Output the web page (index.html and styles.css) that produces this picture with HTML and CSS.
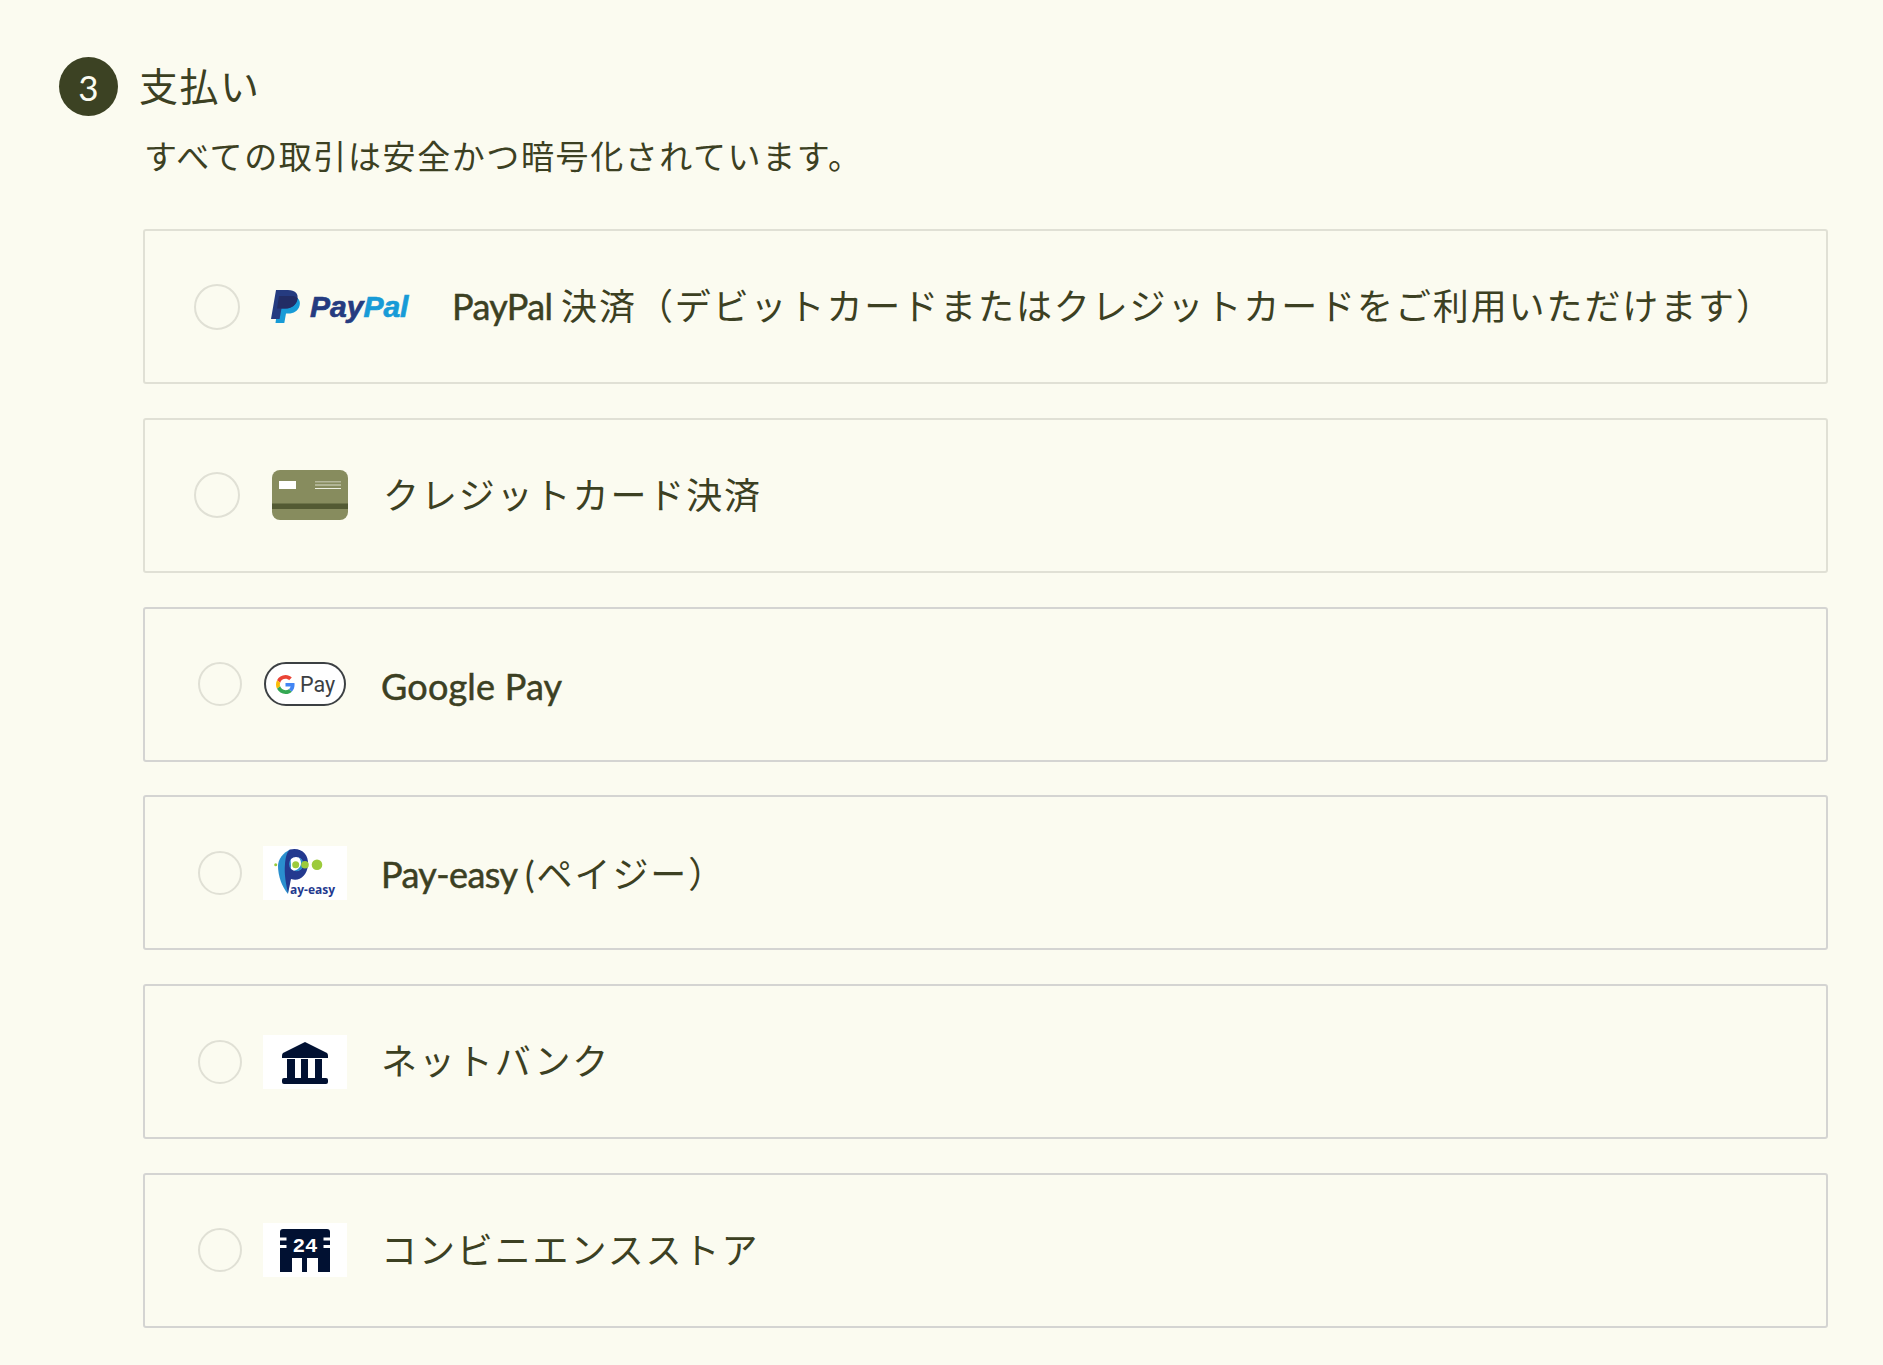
FILE: index.html
```html
<!DOCTYPE html>
<html lang="ja">
<head>
<meta charset="utf-8">
<title>支払い</title>
<link rel="stylesheet" href="styles.css">
</head>
<body>
<main class="page">
  <header class="step">
    <span class="step-num">3</span>
    <h2 class="step-title">支払い</h2>
  </header>
  <p class="step-sub">すべての取引は安全かつ暗号化されています。</p>
  <div class="methods">
    <label class="method method-wide warm">
      <span class="radio radio-lg"></span>
      <span class="logo-paypal">
        <svg class="pp-mark" width="29" height="33" viewBox="0 0 29 33" aria-hidden="true">
          <path fill="#179bd7" d="M8 6H20C26 6 30 9.500 28.600 15.500C27.300 21 22.500 23.500 17.500 23.500H15L13.300 33H4.500Z"/>
          <path fill="#253b80" d="M5 0H17C24 0 27.500 3.500 26.500 9C25.300 15.500 20 18.500 14 18.500H10.500L8.600 29H0Z"/>
          <path fill="#222d65" d="M8 6H20C23 6 25.300 6.600 26.600 8.200C25.800 15 20.300 18.500 14 18.500H6Z"/>
        </svg>
        <span class="pp-word"><span class="pp-pay">Pay</span><span class="pp-pal">Pal</span></span>
      </span>
      <span class="label"><span class="latin latin-tight">PayPal </span>決済（デビットカードまたはクレジットカードをご利用いただけます）</span>
    </label>
    <label class="method method-card warm">
      <span class="radio radio-lg"></span>
      <svg class="logo-card" width="76" height="50" viewBox="0 0 76 50" aria-hidden="true">
        <rect width="76" height="50" rx="8" fill="#878c5e"/>
        <rect y="33.500" width="76" height="5.500" fill="#535a33"/>
        <rect x="7" y="11" width="17" height="8" fill="#fff"/>
        <rect x="43" y="11" width="26" height="1.500" fill="#b5b89b"/>
        <rect x="43" y="14.500" width="26" height="1" fill="#dcdecb"/>
        <rect x="43" y="18" width="26" height="1" fill="#eef0e2"/>
      </svg>
      <span class="label">クレジットカード決済</span>
    </label>
    <label class="method">
      <span class="radio"></span>
      <span class="logo-box logo-gpay">
        <svg width="19" height="19" viewBox="0 0 48 48" aria-hidden="true">
          <path fill="#ea4335" d="M24 9.500c3.900 0 6.900 1.600 9.100 3.600l6.800-6.800C35.900 2.400 30.500 0 24 0 14.600 0 6.500 5.400 2.600 13.200l7.900 6.200C12.400 13.700 17.700 9.500 24 9.500z"/>
          <path fill="#4285f4" d="M46.900 24.500c0-1.600-.1-3.100-.4-4.500H24v9h12.900c-.6 3-2.300 5.500-4.800 7.200l7.700 6c4.500-4.200 7.100-10.300 7.100-17.700z"/>
          <path fill="#fbbc05" d="M10.500 28.600c-.5-1.500-.8-3-.8-4.600s.3-3.100.8-4.600l-7.900-6.200C.9 16.500 0 20.100 0 24s.9 7.500 2.600 10.800l7.900-6.200z"/>
          <path fill="#34a853" d="M24 48c6.500 0 11.900-2.100 15.900-5.800l-7.700-6c-2.200 1.500-4.900 2.300-8.200 2.300-6.300 0-11.600-4.200-13.500-9.900l-7.900 6.200C6.500 42.600 14.600 48 24 48z"/>
        </svg>
        <span class="gpay-word">Pay</span>
      </span>
      <span class="label label-latin"><span class="latin">Google Pay</span></span>
    </label>
    <label class="method">
      <span class="radio"></span>
      <svg class="logo-box" width="84" height="54" viewBox="0 0 84 54" aria-hidden="true">
        <rect width="84" height="54" fill="#fff"/>
        <path fill="#2a8fce" d="M27 3.500C20 7 15 13 15 20C15 30 19 41 25 48L28 20Z"/>
        <path fill="#23398f" fill-rule="evenodd" d="M27 3.500C38 1 46 8 45 19C44 30 36 36 28 33C27 38 26 43 25 47C23 38 21 28 22 18C22.500 11 24 6 27 3.500ZM33 11A7 7 0 1 0 33 25A7 7 0 1 0 33 11Z"/>
        <path fill="#2a8fce" d="M36 11.500A7 7 0 0 1 31 24.700C35 24 38 21 38 17C38 15 37 13 36 11.500Z"/>
        <circle cx="12.700" cy="18.700" r="1.500" fill="#9ccb3c"/>
        <circle cx="32.700" cy="18.700" r="3.500" fill="#9ccb3c"/>
        <circle cx="42" cy="18.700" r="3.800" fill="#9ccb3c"/>
        <circle cx="54" cy="18.700" r="5.300" fill="#9ccb3c"/>
        <text class="pe-word" x="27" y="48">ay-easy</text>
      </svg>
      <span class="label label-latin"><span class="latin latin-tight">Pay-easy </span>(ペイジー）</span>
    </label>
    <label class="method">
      <span class="radio"></span>
      <svg class="logo-box" width="84" height="54" viewBox="0 0 84 54" aria-hidden="true">
        <rect width="84" height="54" fill="#fff"/>
        <path fill="#011132" d="M42 7L64 18Q65 19 65 21V23H19V21Q19 19 20 18Z"/>
        <rect x="24" y="24" width="8" height="19" fill="#011132"/>
        <rect x="38" y="24" width="7" height="19" fill="#011132"/>
        <rect x="52" y="24" width="7" height="19" fill="#011132"/>
        <rect x="19" y="43" width="46" height="6" rx="2" fill="#011132"/>
      </svg>
      <span class="label">ネットバンク</span>
    </label>
    <label class="method">
      <span class="radio"></span>
      <svg class="logo-box" width="84" height="54" viewBox="0 0 84 54" aria-hidden="true">
        <rect width="84" height="54" fill="#fff"/>
        <path fill="#011132" d="M20 6H64Q67 6 67 9V49H55V35H44V49H39V35H29V49H17V9Q17 6 20 6Z"/>
        <rect x="17" y="14.500" width="6.500" height="3" fill="#fff"/>
        <rect x="17" y="22" width="6.500" height="3" fill="#fff"/>
        <rect x="60.500" y="14.500" width="6.500" height="3" fill="#fff"/>
        <rect x="60.500" y="22" width="6.500" height="3" fill="#fff"/>
        <text class="conv-word" x="42" y="28.500">24</text>
      </svg>
      <span class="label">コンビニエンスストア</span>
    </label>
  </div>
</main>
</body>
</html>
```
FILE: styles.css
```css
* { box-sizing: border-box; }
html, body { margin: 0; height: 100%; }
body {
  background: #fbfbf0;
  color: #3c4022;
  font-family: Lato, "Noto Sans CJK JP", sans-serif;
  overflow: hidden;
}
.page { padding: 57px 55px 0 59px; }
.step { display: flex; align-items: center; gap: 21px; }
.step-num {
  width: 59px; height: 59px; border-radius: 50%;
  background: #3c4223; color: #fbfbf0;
  display: flex; align-items: center; justify-content: center;
  font-size: 35px; font-weight: 400;
}
.step-title { margin: 0; font-size: 39px; font-weight: 400; letter-spacing: 1.500px; line-height: 59px; }
.step-sub { margin: 17px 0 0 85px; font-size: 33px; letter-spacing: 1.600px; line-height: 46px; }
.methods { margin: 50px 0 0 84px; display: flex; flex-direction: column; gap: 33.800px; }
.method {
  height: 155px; border: 2px solid #d4d4d2; border-radius: 3px;
  display: flex; align-items: center; padding-left: 53px;
}
.warm { border-color: #e0e0d5; }
.method-wide, .method-card { padding-left: 49px; }
.radio {
  width: 44px; height: 44px; border: 2px solid #e0e0d5; border-radius: 50%;
  flex: none; margin-right: 21px; background: #fbfbf0;
}
.radio-lg { width: 46px; height: 46px; margin-right: 31px; }
.method-card .radio-lg { margin-right: 32px; }
.logo-box { flex: none; display: block; }
.logo-paypal { display: flex; align-items: center; gap: 10px; width: 138px; flex: none; margin-right: 43px; }
.pp-mark { flex: none; }
.pp-word { font-family: "Liberation Sans", sans-serif; font-weight: 700; font-style: italic; font-size: 30px; line-height: 1; -webkit-text-stroke: .7px currentColor; }
.pp-pay { color: #253b80; }
.pp-pal { color: #179bd7; }
.logo-card { flex: none; margin-right: 35px; }
.logo-gpay {
  width: 82px; height: 44px; margin: 0 1px; border: 2px solid #3c4043; border-radius: 22px;
  background: #fff; display: flex; align-items: center; padding-left: 10px; gap: 5px;
}
.gpay-word { font-family: Roboto, sans-serif; font-size: 21.500px; color: #3c4043; }
.pe-word { font-family: "Open Sans", sans-serif; font-weight: 700; font-size: 12px; fill: #23398f; }
.conv-word { font-family: "Liberation Mono", monospace; font-weight: 700; font-size: 21px; fill: #fff; text-anchor: middle; }
.label { font-size: 36px; letter-spacing: 1.900px; line-height: 1.2; white-space: nowrap; margin-left: 34px; }
.method-wide .label, .method-card .label { margin-left: 0; }
.label-latin { padding-top: 4px; }
.latin { letter-spacing: .2px; -webkit-text-stroke: .5px currentColor; }
.latin-tight { letter-spacing: -.6px; }
```
